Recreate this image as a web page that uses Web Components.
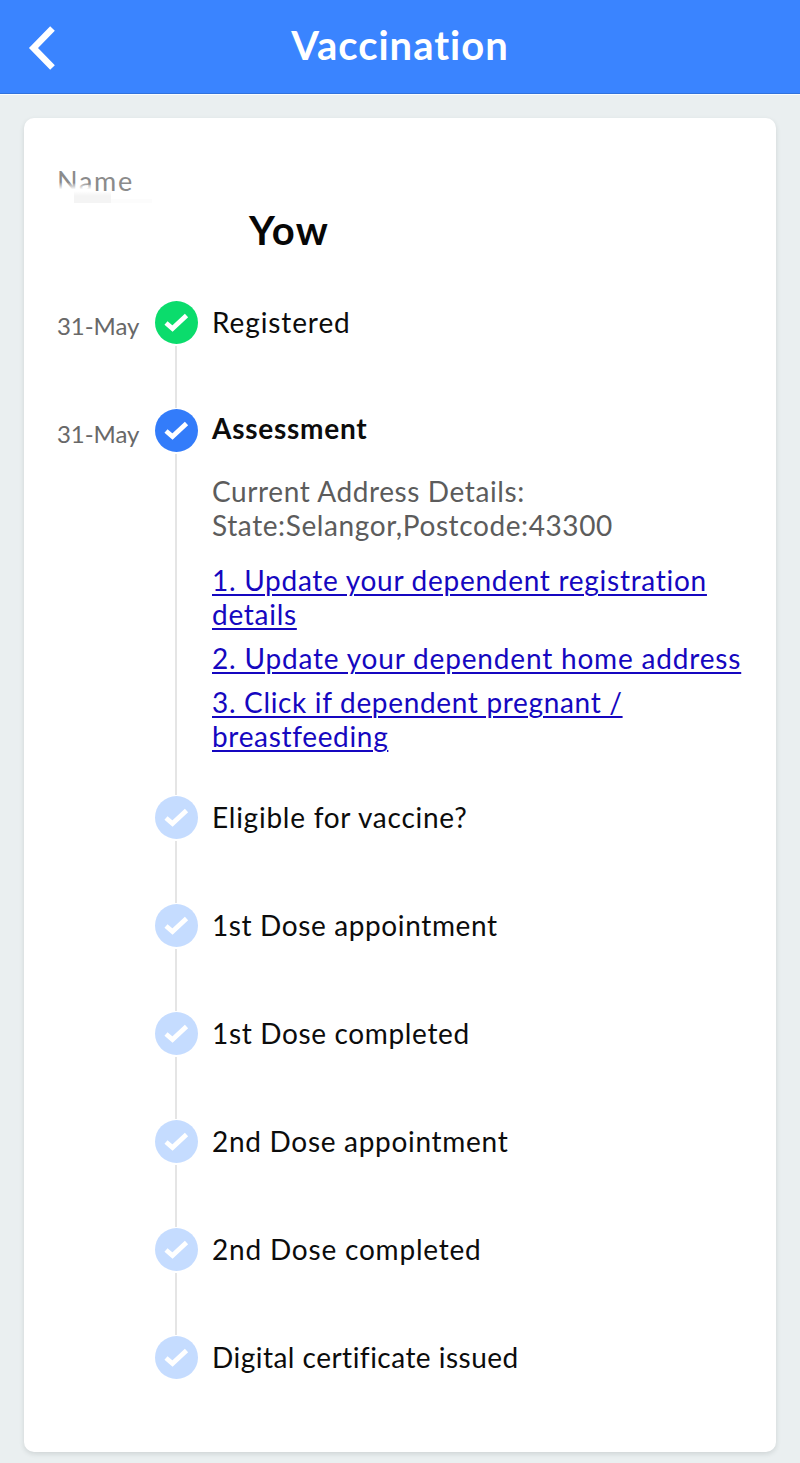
<!DOCTYPE html>
<html lang="en">
<head>
<meta charset="utf-8">
<title>Vaccination</title>
<style>
  body {
    margin: 0;
    background: #eaeff0;
    font-family: Lato, "Liberation Sans", sans-serif;
    font-kerning: normal;
    font-variant-ligatures: none;
  }
</style>
</head>
<body>
<app-screen>
  <nav-bar slot="header">Vaccination</nav-bar>
  <status-card>
    <person-name label="Name">Yow</person-name>
    <step-list>
      <timeline-step date="31-May" state="done" style="--track: 0.9px">Registered</timeline-step>
      <timeline-step date="31-May" state="current">Assessment
        <address-details slot="details">
          <span>Current Address Details:</span>
          <span>State:Selangor,Postcode:43300</span>
        </address-details>
        <step-link slot="details" style="--track: 0.72px">1. Update your dependent registration details</step-link>
        <step-link slot="details" style="--track: 0.82px">2. Update your dependent home address</step-link>
        <step-link slot="details">3. Click if dependent pregnant / breastfeeding</step-link>
      </timeline-step>
      <timeline-step style="--track: 0.75px">Eligible for vaccine?</timeline-step>
      <timeline-step style="--track: 0.62px">1st Dose appointment</timeline-step>
      <timeline-step>1st Dose completed</timeline-step>
      <timeline-step style="--track: 0.7px">2nd Dose appointment</timeline-step>
      <timeline-step style="--track: 0.8px">2nd Dose completed</timeline-step>
      <timeline-step last style="--track: 0.48px">Digital certificate issued</timeline-step>
    </step-list>
  </status-card>
</app-screen>

<script>
(function () {
  class BaseElement extends HTMLElement {
    constructor() {
      super();
      this.attachShadow({ mode: 'open' });
    }

    connectedCallback() {
      const template = document.createElement('template');
      template.innerHTML = this.template();
      this.shadowRoot.innerHTML = '';
      this.shadowRoot.append(template.content.cloneNode(true));
    }
  }

  class AppScreen extends BaseElement {
    template() {
      return `
        <style>
          :host { display: flex; flex-direction: column; box-sizing: border-box; height: 1463px; overflow: hidden; }
          main { padding: 23px 24px 11px; flex: 1; display: flex; }
        </style>
        <slot name="header"></slot>
        <main><slot></slot></main>
      `;
    }
  }

  class NavBar extends BaseElement {
    template() {
      return `
        <style>
          :host {
            display: grid;
            grid-template-columns: 56px 1fr 56px;
            align-items: center;
            box-sizing: border-box;
            height: 95px;
            background: #3a84ff;
            border-bottom: 1px solid #fbfdfd;
            box-shadow: inset 0 -1px #3273dc;
            color: #ffffff;
          }
          svg { display: block; margin: 2px 0 0 27px; }
          h1 {
            margin: 0;
            padding-bottom: 4px;
            font-size: 40px;
            line-height: 48px;
            font-weight: 700;
            letter-spacing: 1px;
            text-align: center;
          }
        </style>
        <svg width="29" height="44" viewBox="0 0 29 44" fill="none" stroke="#ffffff" stroke-width="6.5">
          <path d="M25.5 2.5 L6.5 22 L25.5 41.5"/>
        </svg>
        <h1><slot></slot></h1>
      `;
    }
  }

  class StatusCard extends BaseElement {
    template() {
      return `
        <style>
          :host {
            display: block;
            box-sizing: border-box;
            flex: 1;
            padding: 47px 33px 0;
            background: #ffffff;
            border-radius: 10px;
            box-shadow: 0 2px 5px rgba(40, 60, 60, 0.14);
          }
        </style>
        <slot></slot>
      `;
    }
  }

  class PersonName extends BaseElement {
    template() {
      return `
        <style>
          :host { display: block; height: 136px; }
          .label {
            position: relative;
            width: 100px;
            padding-top: 1px;
            font-size: 27px;
            line-height: 30px;
            letter-spacing: 1.7px;
            color: #8b8b8b;
          }
          /* smudge over the lower left part of the label */
          .label svg { position: absolute; left: 0; top: 0; }
          .name {
            margin-left: 192px;
            padding-top: 10px;
            font-size: 40px;
            line-height: 48px;
            font-weight: 700;
            letter-spacing: 1.4px;
            color: #070707;
          }
        </style>
        <div class="label">${this.getAttribute('label')}
          <svg width="100" height="40" viewBox="0 0 100 40">
            <defs>
              <linearGradient id="fade" x1="0" y1="0" x2="0" y2="1">
                <stop offset="0" stop-color="#ffffff" stop-opacity="0"/>
                <stop offset="0.35" stop-color="#ffffff"/>
              </linearGradient>
              <linearGradient id="smudge" x1="0" y1="0" x2="0" y2="1">
                <stop offset="0" stop-color="#ffffff"/>
                <stop offset="0.4" stop-color="#f4f4f4"/>
              </linearGradient>
            </defs>
            <path d="M0 17 L38 20 L38 38 L0 38 Z" fill="url(#fade)"/>
            <path d="M17 26 H54 V38 H17 Z" fill="url(#smudge)"/>
            <path d="M54 34 H95 V38 H54 Z" fill="#fcfcfc"/>
          </svg>
        </div>
        <div class="name"><slot></slot></div>
      `;
    }
  }

  class StepList extends BaseElement {
    template() {
      return `
        <style>
          :host { display: flex; flex-direction: column; }
        </style>
        <slot></slot>
      `;
    }
  }

  class TimelineStep extends BaseElement {
    template() {
      return `
        <style>
          :host {
            --mark: #c5dcff;
            display: grid;
            grid-template-columns: 98px 43px 1fr;
            min-height: 108px;
          }
          :host([state="done"]) { --mark: #0bdc6c; }
          :host([state="current"]) { --mark: #337cfa; }
          .date {
            padding-top: 10px;
            font-size: 24px;
            line-height: 29px;
            letter-spacing: -0.05px;
            color: #686868;
          }
          .track { display: flex; flex-direction: column; align-items: center; }
          .track svg { display: block; flex: none; }
          .line { width: 2px; flex: 1; margin: 2px 1px 1px 0; background: #e5e5e5; }
          :host([last]) .line { display: none; }
          .body { padding: 4px 0 20px 14px; margin-right: -12px; }
          .title {
            font-size: 28px;
            line-height: 34px;
            letter-spacing: var(--track, 0.65px);
            color: #0c0c0c;
          }
          :host([state="current"]) .title { font-weight: 700; letter-spacing: 0.75px; }
          :host([state="current"]) .body { padding: 2px 0 33px 14px; }
        </style>
        <div class="date">${this.getAttribute('date') || ''}</div>
        <div class="track">
          <svg width="43" height="43" viewBox="0 0 43 43">
            <circle cx="21.5" cy="21.5" r="21.5" fill="var(--mark)"/>
            <path d="M11 22 L17.5 27.5 L31.5 14.5" fill="none" stroke="#ffffff" stroke-width="4.8"/>
          </svg>
          <div class="line"></div>
        </div>
        <div class="body">
          <div class="title"><slot></slot></div>
          <slot name="details"></slot>
        </div>
      `;
    }
  }

  class AddressDetails extends BaseElement {
    template() {
      return `
        <style>
          :host {
            display: flex;
            flex-direction: column;
            margin: 29px 0 21px;
            font-size: 28px;
            line-height: 34px;
            color: #5c5c5c;
          }
          ::slotted(span) { letter-spacing: 0.6px; }
        </style>
        <slot></slot>
      `;
    }
  }

  class StepLink extends BaseElement {
    template() {
      return `
        <style>
          :host { display: block; margin-bottom: 10px; font-size: 28px; line-height: 34px; }
          a {
            color: #1507c0;
            letter-spacing: var(--track, 0.67px);
            text-decoration: underline;
            text-decoration-thickness: 2px;
            text-underline-offset: 3px;
          }
        </style>
        <a href="#"><slot></slot></a>
      `;
    }
  }

  customElements.define('app-screen', AppScreen);
  customElements.define('nav-bar', NavBar);
  customElements.define('status-card', StatusCard);
  customElements.define('person-name', PersonName);
  customElements.define('step-list', StepList);
  customElements.define('timeline-step', TimelineStep);
  customElements.define('address-details', AddressDetails);
  customElements.define('step-link', StepLink);
}());
</script>
</body>
</html>
